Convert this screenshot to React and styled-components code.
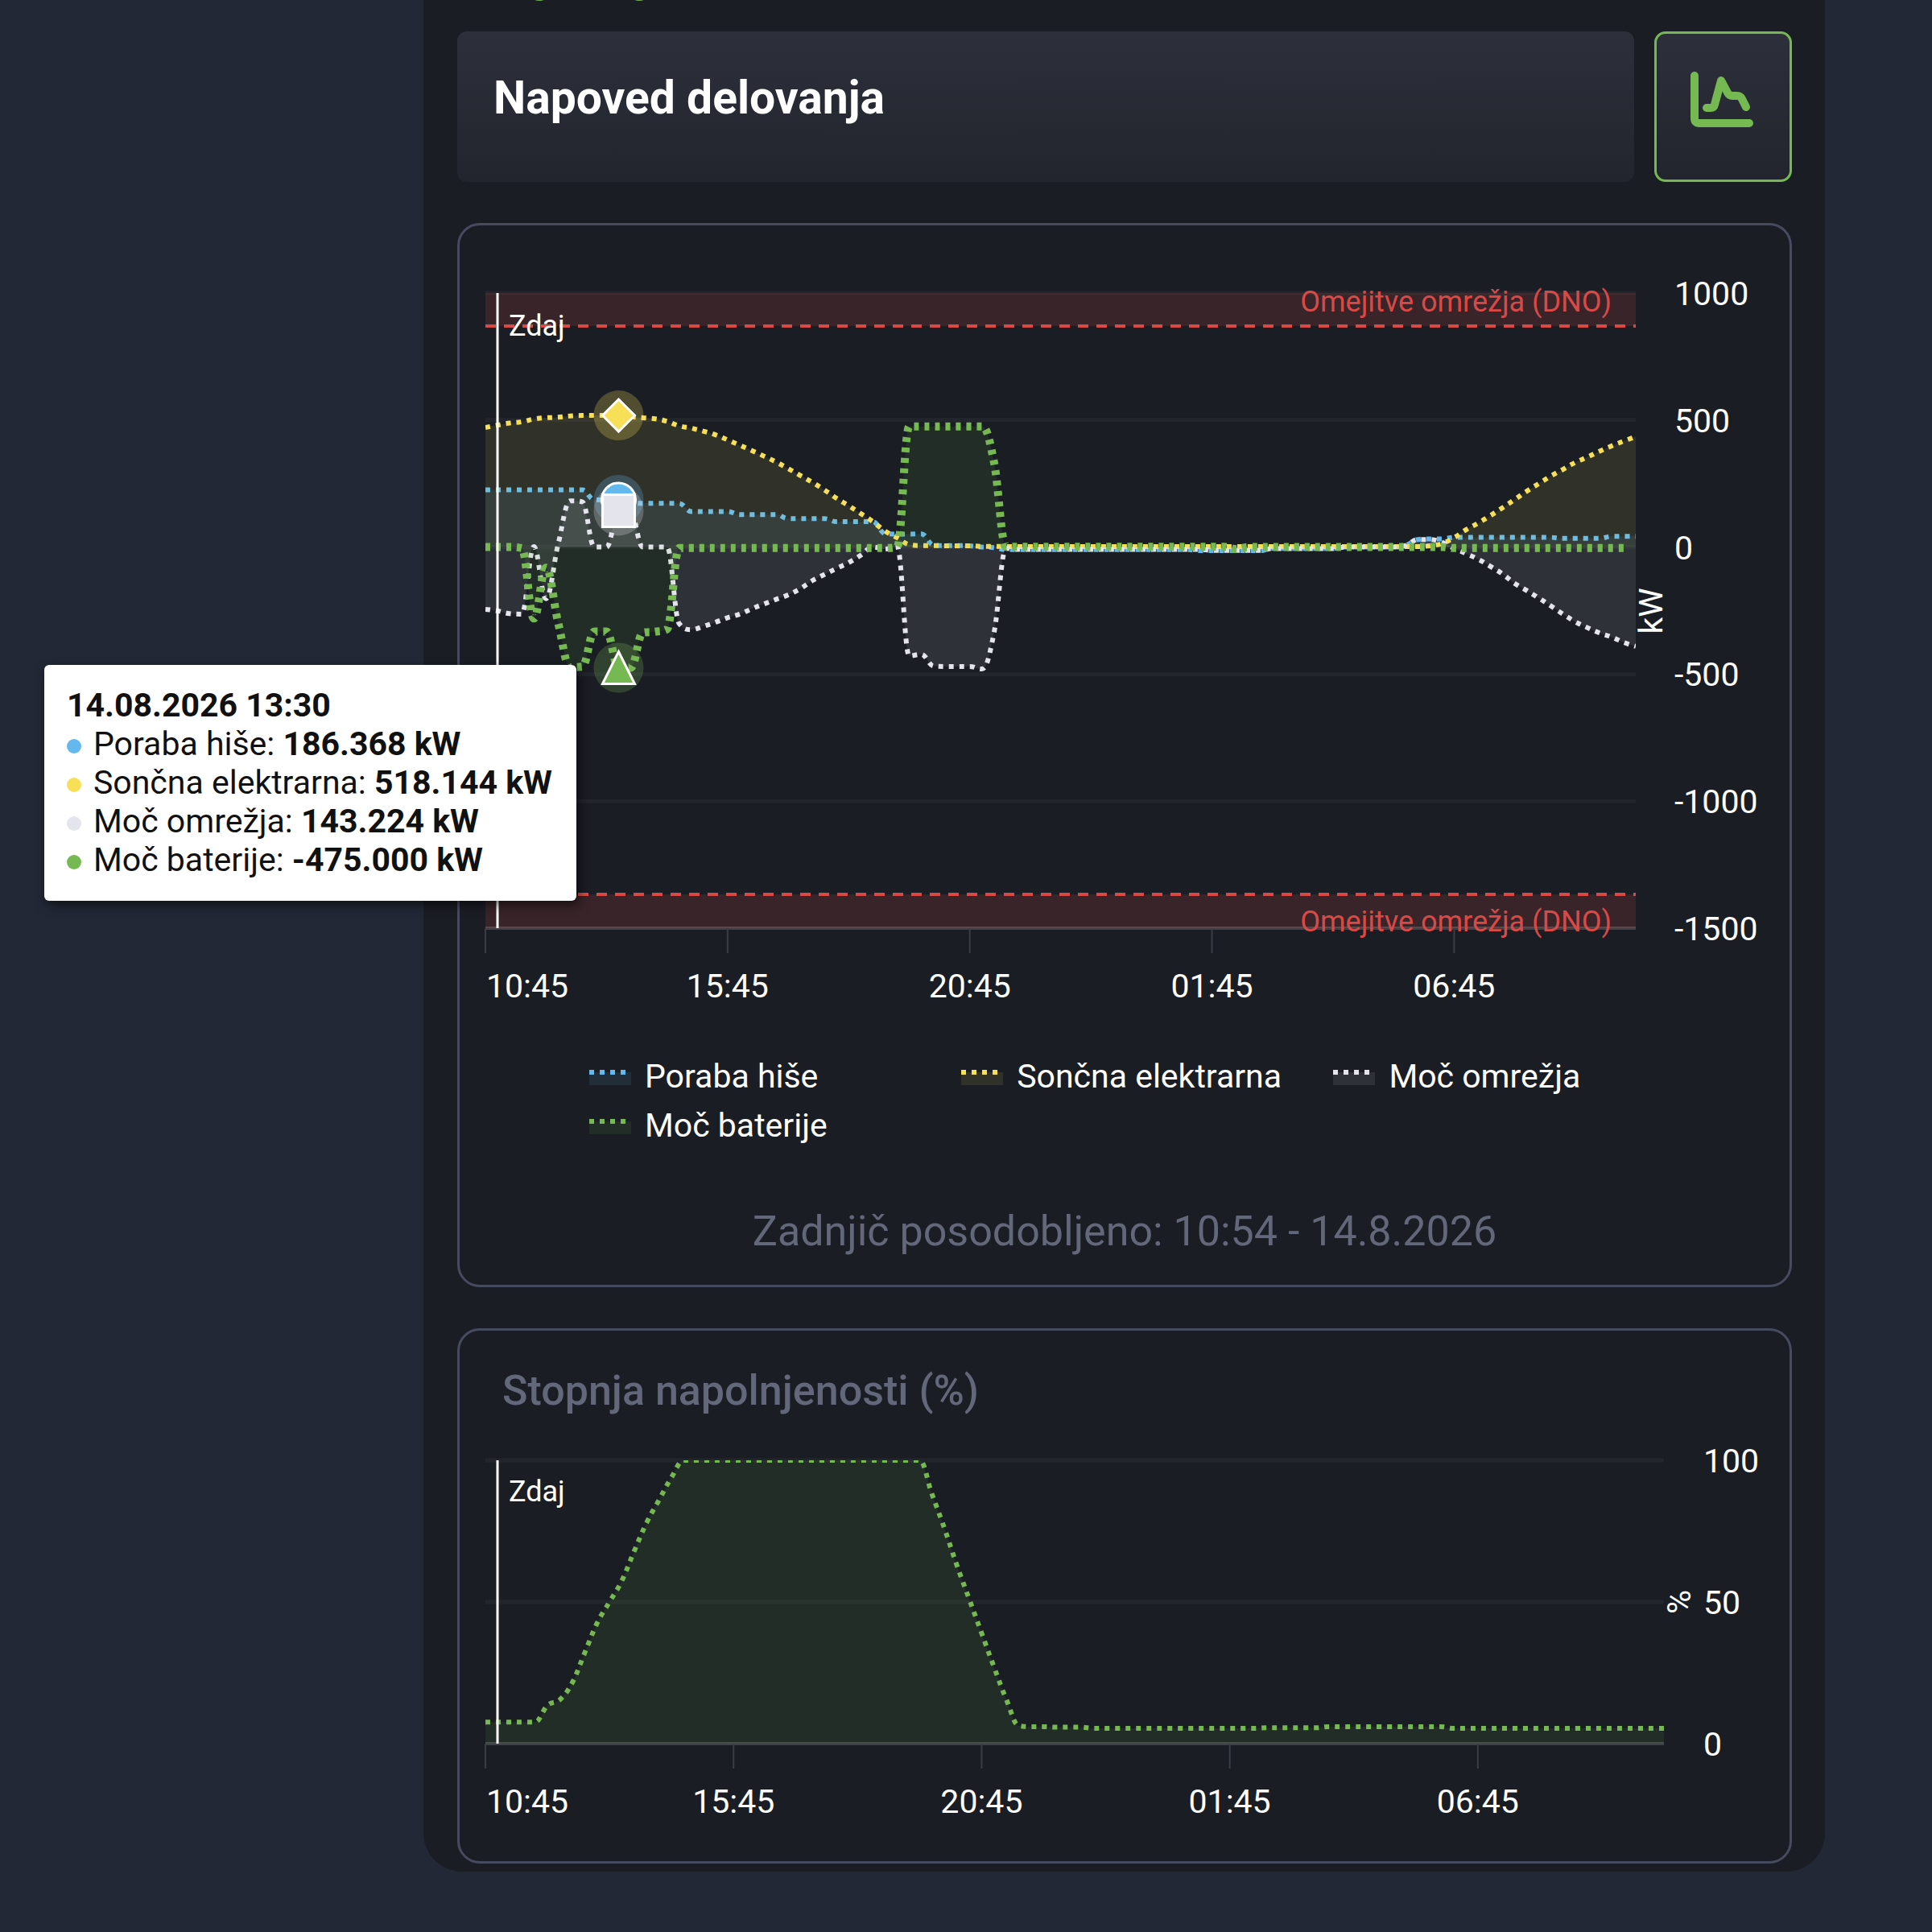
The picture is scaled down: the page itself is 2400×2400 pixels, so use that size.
import React from "react";
import styled, { createGlobalStyle } from "styled-components";

const colors = {
  page: "#222836",
  panel: "#1a1d24",
  border: "#474b60",
  text: "#ffffff",
  muted: "#626779",
  green: "#76b852",
  blue: "#63b9ee",
  yellow: "#f7df58",
  white: "#e4e5ec",
  red: "#d94a46",
};

const fill = (count, value) => Array(count).fill(value);

// one value every 15 minutes, starting at 10:45
const house = [
  ...fill(9, 225), 186, 186, 186, 175, ...fill(4, 172), ...fill(4, 140), ...fill(4, 128),
  ...fill(4, 112), ...fill(4, 100), 53, 51, 51, 52, 8, 6, 6, 5, 0, -2, ...fill(16, -10),
  ...fill(6, -14), ...fill(6, -5), ...fill(5, 0), 6, 30, 32, 32, ...fill(9, 38),
  ...fill(4, 34), 42, 42, 42,
];

const solar = [
  471, 480, 488, 493, 504, 509, 511, 516, 518, 518, 518, 518, 513, 509, 505, 495, 477, 468,
  456, 442, 422, 401, 380, 358, 335, 309, 282, 255, 225, 192, 163, 132, 100, 63, 37, 10, 6,
  6, 5, 5, 5, 3, 3, ...fill(35, 2), 5, 14, 37, 69, 95, 124, 155, 187, 220, 250, 280, 306,
  333, 354, 377, 398, 417, 435,
];

const grid = [
  -245, -251, -262, -264, 2, -203, 10, 182, 178, 0, 0, 143, 137, 0, 0, 0, -301, -325, -312,
  -296, -278, -264, -243, -224, -206, -188, -164, -132, -108, -84, -61, -32, 0, -8, 2, -428,
  -422, -468, -470, -470, -470, -480, -338, -5, ...fill(16, -9), ...fill(5, -13),
  ...fill(6, -6), ...fill(5, 0), 6, 30, 30, 18, -5, -26, -48, -76, -106, -143, -171, -201,
  -232, -264, -294, -317, -338, -354, -375, -391,
];

const battery = [
  0, 0, 0, -4, -281, -81, -296, -473, -471, -332, -332, -475, -475, -337, -333, -323,
  ...fill(18, -4), 0, ...fill(7, 475), 335, ...fill(19, 1), -8, ...fill(17, 0),
  ...fill(15, -4),
];

const charge = [
  7.6, 7.6, 7.6, 7.6, 7.6, 13.5, 15.5, 21.5, 32, 42.5, 50, 57.5, 68, 78, 86, 94,
  ...fill(20, 100), 88, 76, 63, 51, 39, 27, 15.5, 6.3, 6, 6, 5.8, 5.8, 5.8, ...fill(14, 5.4),
  ...fill(5, 5.6), ...fill(10, 6), ...fill(18, 5.4),
];

const POINTS = 96;
const TIMES = ["10:45", "15:45", "20:45", "01:45", "06:45"];

const series = [
  { id: "house", name: "Poraba hiše", value: "186.368 kW", color: colors.blue, data: house, width: 6 },
  { id: "solar", name: "Sončna elektrarna", value: "518.144 kW", color: colors.yellow, data: solar, width: 6 },
  { id: "grid", name: "Moč omrežja", value: "143.224 kW", color: colors.white, data: grid, width: 6 },
  { id: "battery", name: "Moč baterije", value: "-475.000 kW", color: colors.green, data: battery, width: 10 },
];

const makeScale = ({ left, right, top, bottom, min, max }) => ({
  x: (i) => left + (i * (right - left)) / (POINTS - 1),
  y: (v) => bottom - ((v - min) * (bottom - top)) / (max - min),
});

// keeps a control point between its two neighbours
const limit = (c, a, b) => Math.min(Math.max(c, Math.min(a, b)), Math.max(a, b));

const splinePath = (points) => {
  let path = `M${points[0][0]} ${points[0][1]}`;
  let prevRight = points[0];
  for (let i = 1; i < points.length; i++) {
    const [x, y] = points[i];
    const [lx, ly] = points[i - 1];
    let left = [x, y];
    let right = [x, y];
    if (i < points.length - 1) {
      const [nx, ny] = points[i + 1];
      const slope = (ny - ly) / (nx - lx);
      const dl = (x - lx) / 2.5;
      const dr = (nx - x) / 2.5;
      let leftY = limit(y - slope * dl, ly, y);
      let rightY = limit(2 * y - leftY, ny, y);
      leftY = 2 * y - rightY;
      left = [x - dl, leftY];
      right = [x + dr, rightY];
    }
    path += ` C${prevRight[0]} ${prevRight[1]} ${left[0]} ${left[1]} ${x} ${y}`;
    prevRight = right;
  }
  return path;
};

const Area = ({ data, color, width, scale, clip }) => {
  const points = data.slice(0, POINTS).map((v, i) => [scale.x(i), scale.y(v)]);
  const line = splinePath(points);
  const zero = scale.y(0);
  return (
    <g clipPath={`url(#${clip})`}>
      <path
        d={`${line} L${points[points.length - 1][0]} ${zero} L${points[0][0]} ${zero} Z`}
        fill={color}
        fillOpacity={0.1}
      />
      <path d={line} fill="none" stroke={color} strokeWidth={width} strokeDasharray="6 7" />
    </g>
  );
};

const TimeAxis = ({ left, right, y, scale }) => (
  <g>
    <line x1={left} x2={right} y1={y} y2={y} stroke="#ffffff" strokeOpacity={0.16} strokeWidth={4} />
    {TIMES.map((time, i) => {
      const x = scale.x(i * 20);
      return (
        <g key={time}>
          <line x1={x} x2={x} y1={y} y2={y + 31} stroke="#3a3d44" strokeWidth={2} />
          <AxisText x={i === 0 ? left + 1 : x} y={y + 86} textAnchor={i === 0 ? "start" : "middle"}>
            {time}
          </AxisText>
        </g>
      );
    })}
  </g>
);

const PowerChart = () => {
  const box = { left: 32, right: 1461, top: 84, bottom: 873, min: -1500, max: 1000 };
  const scale = makeScale(box);
  const width = box.right - box.left;
  const x = scale.x(11);
  return (
    <Chart viewBox="0 0 1652 980" role="img" aria-label="Napoved delovanja">
      <clipPath id="power-clip">
        <rect x={box.left} y={box.top} width={width} height={box.bottom - box.top} />
      </clipPath>
      <rect x={box.left} y={box.top} width={width} height={41} fill={colors.red} fillOpacity={0.16} />
      <rect x={box.left} y={831} width={width} height={42} fill={colors.red} fillOpacity={0.16} />
      {[1000, 500, 0, -500, -1000].map((v) => (
        <GridLine key={v} x1={box.left} x2={box.right} y1={scale.y(v)} y2={scale.y(v)} />
      ))}
      <TimeAxis left={box.left} right={box.right} y={box.bottom} scale={scale} />
      <LimitLine x1={box.left} x2={box.right} y1={125} y2={125} />
      <LimitLine x1={box.left} x2={box.right} y1={831} y2={831} />
      {series.map((s) => (
        <Area key={s.id} {...s} scale={scale} clip="power-clip" />
      ))}
      <NowLine x1={47} x2={47} y1={box.top} y2={box.bottom} />
      <SmallText x={61} y={137}>Zdaj</SmallText>
      <SmallText x={1431} y={107} textAnchor="end" $color={colors.red}>Omejitve omrežja (DNO)</SmallText>
      <SmallText x={1431} y={877} textAnchor="end" $color={colors.red}>Omejitve omrežja (DNO)</SmallText>
      {series.map((s) => (
        <circle key={s.id} cx={x} cy={scale.y(s.data[11])} r={31} fill={s.color} fillOpacity={0.25} />
      ))}
      <g stroke="#ffffff" strokeWidth={3}>
        <circle cx={x} cy={scale.y(186)} r={21} fill={colors.blue} />
        <path d={`M${x} ${scale.y(518) - 20} l20 20 l-20 20 l-20 -20 Z`} fill={colors.yellow} />
        <rect x={x - 20} y={scale.y(143) - 20} width={40} height={40} fill={colors.white} />
        <path d={`M${x} ${scale.y(-475) - 20} l20 40 h-40 Z`} fill={colors.green} />
      </g>
      {[1000, 500, 0, -500, -1000, -1500].map((v) => (
        <AxisText key={v} x={1509} y={scale.y(v) + 15}>{v}</AxisText>
      ))}
      <AxisText transform="translate(1494 479) rotate(-90)" textAnchor="middle">kW</AxisText>
    </Chart>
  );
};

const ChargeChart = () => {
  const box = { left: 32, right: 1496, top: 56, bottom: 408, min: 0, max: 100 };
  const scale = makeScale(box);
  return (
    <Chart viewBox="0 0 1652 554" role="img" aria-label="Stopnja napolnjenosti (%)">
      <clipPath id="charge-clip">
        <rect x={box.left} y={box.top} width={box.right - box.left} height={box.bottom - box.top} />
      </clipPath>
      {[100, 50].map((v) => (
        <GridLine key={v} x1={box.left} x2={box.right} y1={scale.y(v)} y2={scale.y(v)} />
      ))}
      <Area data={charge} color={colors.green} width={6} scale={scale} clip="charge-clip" />
      <TimeAxis left={box.left} right={box.right} y={box.bottom} scale={scale} />
      <NowLine x1={47} x2={47} y1={box.top} y2={box.bottom} />
      <SmallText x={61} y={107}>Zdaj</SmallText>
      {[100, 50, 0].map((v) => (
        <AxisText key={v} x={1545} y={scale.y(v) + 15}>{v}</AxisText>
      ))}
      <AxisText transform="translate(1529 232) rotate(-90)" textAnchor="middle">%</AxisText>
    </Chart>
  );
};

const ChartIcon = () => (
  <svg width="78" height="70" viewBox="0 0 78 70" fill="none" aria-hidden="true">
    <g stroke={colors.green} strokeWidth="10" strokeLinecap="round" strokeLinejoin="round">
      <path d="M5 5 V58 Q5 64 11 64 H73" />
      <path d="M20 45 H25 Q29 45 30 41 L38 11 L46 26 Q48 30 52 30 H58 Q62 30 64 34 L69 44" />
    </g>
  </svg>
);

const App = () => {
  return (
    <Page>
      <GlobalStyle />
      <Panel>
        <Crumb viewBox="0 0 1658 39" preserveAspectRatio="xMinYMin slice" aria-hidden="true">
          <ellipse cx="102" cy="-6" rx="11" ry="7" />
          <ellipse cx="226" cy="-6" rx="11" ry="7" />
        </Crumb>
        <Header>
          <TitleBar>
            <Title>Napoved delovanja</Title>
          </TitleBar>
          <IconButton type="button" aria-label="Graf">
            <ChartIcon />
          </IconButton>
        </Header>
        <Card>
          <ChartBox>
            <PowerChart />
            <Tooltip role="tooltip">
              <TooltipRow><strong>14.08.2026 13:30</strong></TooltipRow>
              {series.map((s) => (
                <TooltipRow key={s.id}>
                  <Dot $color={s.color} />
                  {s.name}: <strong>{s.value}</strong>
                </TooltipRow>
              ))}
            </Tooltip>
          </ChartBox>
          <Legend>
            {series.map((s) => (
              <LegendItem key={s.id} type="button">
                <svg width="52" height="20" viewBox="0 0 52 20" aria-hidden="true">
                  <rect y="4" width="52" height="16" fill={s.color} fillOpacity={0.1} />
                  <line x2="52" y1="4" y2="4" stroke={s.color} strokeWidth="6" strokeDasharray="6 7" />
                </svg>
                {s.name}
              </LegendItem>
            ))}
          </Legend>
          <Updated>Zadnjič posodobljeno: 10:54 - 14.8.2026</Updated>
        </Card>
        <Card>
          <CardTitle>Stopnja napolnjenosti (%)</CardTitle>
          <ChargeChart />
        </Card>
      </Panel>
    </Page>
  );
};

export default App;

const GlobalStyle = createGlobalStyle`
  * {
    box-sizing: border-box;
  }

  body {
    margin: 0;
    background: ${colors.page};
    color: ${colors.text};
    font-family: Roboto, sans-serif;
  }
`;

const Page = styled.div`
  display: flex;
  min-height: 100vh;
  align-items: flex-start;
  padding: 0 133px 74px 526px;
`;

const Panel = styled.main`
  flex: 1;
  min-width: 0;
  padding: 0 41px 10px 42px;
  background: ${colors.panel};
  border-radius: 0 0 48px 48px;
`;

const Crumb = styled.svg`
  display: block;
  width: 100%;
  height: 39px;
  fill: ${colors.green};
`;

const Header = styled.header`
  display: flex;
  gap: 25px;
`;

const TitleBar = styled.div`
  flex: 1;
  padding: 51px 45px 72px;
  border-radius: 12px;
  background: linear-gradient(#2d303b, #22252d);
`;

const Title = styled.h1`
  margin: 0;
  font-size: 57px;
  line-height: 64px;
  font-weight: 700;
`;

const IconButton = styled.button`
  display: flex;
  justify-content: center;
  align-items: flex-start;
  width: 171px;
  padding: 47px 4px 0 0;
  border: 3px solid ${colors.green};
  border-radius: 14px;
  background: linear-gradient(#2d303b, #22252d);
  cursor: pointer;
`;

const Card = styled.section`
  margin-top: 51px;
  border: 3px solid ${colors.border};
  border-radius: 28px;
`;

const CardTitle = styled.h2`
  margin: 0;
  padding: 45px 52px 0 53px;
  color: ${colors.muted};
  font-size: 52px;
  line-height: 60px;
  font-weight: 500;
`;

const ChartBox = styled.div`
  position: relative;
`;

const Chart = styled.svg`
  display: block;
  width: 100%;
  height: auto;
`;

const AxisText = styled.text`
  fill: ${colors.text};
  font-size: 41px;
`;

const SmallText = styled.text`
  fill: ${({ $color }) => $color || colors.text};
  font-size: 36px;
`;

const GridLine = styled.line`
  stroke: #ffffff;
  stroke-opacity: 0.04;
  stroke-width: 5px;
`;

const LimitLine = styled.line`
  stroke: ${colors.red};
  stroke-width: 4px;
  stroke-dasharray: 13 10;
`;

const NowLine = styled.line`
  stroke: ${colors.text};
  stroke-width: 3px;
`;

const Tooltip = styled.div`
  position: absolute;
  top: 546px;
  left: -516px;
  padding: 26px 30px 27px 28px;
  border-radius: 6px;
  background: #ffffff;
  color: #111111;
  box-shadow: 3px 5px 14px rgba(0, 0, 0, 0.6);
  font-size: 41px;
  line-height: 48px;
  white-space: nowrap;
`;

const TooltipRow = styled.div`
  strong {
    font-weight: 700;
  }
`;

const Dot = styled.span`
  display: inline-block;
  width: 18px;
  height: 18px;
  margin-right: 15px;
  border-radius: 50%;
  background: ${({ $color }) => $color};
  vertical-align: 2px;
`;

const Legend = styled.div`
  display: grid;
  grid-template-columns: repeat(3, 31%);
  padding: 47px 0 0 161px;
`;

const LegendItem = styled.button`
  display: flex;
  align-items: center;
  gap: 17px;
  padding: 0;
  border: 0;
  background: none;
  color: ${colors.text};
  font-family: inherit;
  font-size: 41px;
  line-height: 61px;
  white-space: nowrap;
  cursor: pointer;
`;

const Updated = styled.p`
  margin: 70px 0 35px;
  color: ${colors.muted};
  font-size: 52px;
  line-height: 62px;
  text-align: center;
`;
